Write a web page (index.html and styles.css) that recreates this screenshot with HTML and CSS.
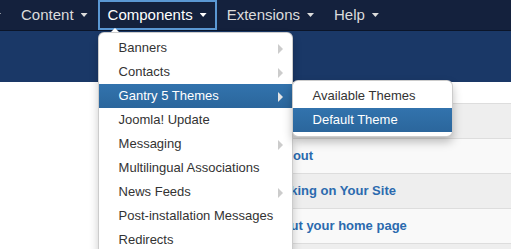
FILE: index.html
```html
<!DOCTYPE html>
<html>
<head>
<meta charset="utf-8">
<link rel="stylesheet" href="styles.css">
</head>
<body>
<header class="topbar">
  <ul class="nav">
    <li class="nav-item"><span class="nav-link">Menus<span class="caret"></span></span></li>
    <li class="nav-item"><span class="nav-link">Content<span class="caret"></span></span></li>
    <li class="nav-item is-open">
      <span class="nav-link">Components<span class="caret"></span></span>
      <ul class="dropdown">
        <li class="dd-item has-sub"><span class="dd-link">Banners</span></li>
        <li class="dd-item has-sub"><span class="dd-link">Contacts</span></li>
        <li class="dd-item has-sub is-active">
          <span class="dd-link">Gantry 5 Themes</span>
          <ul class="submenu">
            <li class="dd-item"><span class="dd-link">Available Themes</span></li>
            <li class="dd-item is-active"><span class="dd-link">Default Theme</span></li>
          </ul>
        </li>
        <li class="dd-item"><span class="dd-link">Joomla! Update</span></li>
        <li class="dd-item has-sub"><span class="dd-link">Messaging</span></li>
        <li class="dd-item"><span class="dd-link">Multilingual Associations</span></li>
        <li class="dd-item has-sub"><span class="dd-link">News Feeds</span></li>
        <li class="dd-item"><span class="dd-link">Post-installation Messages</span></li>
        <li class="dd-item"><span class="dd-link">Redirects</span></li>
        <li class="dd-item"><span class="dd-link">Search</span></li>
        <li class="dd-item"><span class="dd-link">Smart Search</span></li>
      </ul>
    </li>
    <li class="nav-item"><span class="nav-link">Extensions<span class="caret"></span></span></li>
    <li class="nav-item"><span class="nav-link">Help<span class="caret"></span></span></li>
  </ul>
</header>
<div class="band"></div>
<main class="main">
  <div class="side"></div>
  <div class="list">
    <div class="row odd"><span class="row-link">Getting Started</span></div>
    <div class="row"><span class="row-link">Forum About</span></div>
    <div class="row odd"><span class="row-link">Start Working on Your Site</span></div>
    <div class="row"><span class="row-link">Read about your home page</span></div>
    <div class="row odd"><span class="row-link">Extensions</span></div>
  </div>
</main>
</body>
</html>
```
FILE: styles.css
```css
html, body {
  margin: 0;
  padding: 0;
}
body {
  width: 511px;
  height: 249px;
  overflow: hidden;
  background: #fff;
  font-family: "Liberation Sans", Arial, sans-serif;
}
ul {
  list-style: none;
  margin: 0;
  padding: 0;
}

.topbar {
  height: 30px;
  background: #14213d;
  border-bottom: 1px solid #0b1529;
  position: relative;
  z-index: 5;
}
.nav {
  display: flex;
  height: 30px;
  margin-left: -68px;
}
.nav-item {
  position: relative;
  height: 30px;
}
.nav-link {
  display: block;
  padding: 0 10px;
  height: 30px;
  line-height: 30px;
  font-size: 15px;
  color: #dcdcdc;
  white-space: nowrap;
}
.caret {
  display: inline-block;
  width: 7px;
  height: 4px;
  margin-left: 7px;
  vertical-align: middle;
  position: relative;
  top: -1px;
  background: currentColor;
  clip-path: polygon(0 0, 100% 0, 50% 100%);
}
.is-open > .nav-link {
  color: #fff;
  box-shadow: inset 0 0 0 2px #5b98d4;
}

.dropdown {
  position: absolute;
  top: 32px;
  left: 0;
  width: 195px;
  box-sizing: border-box;
  background: #fff;
  border: 1px solid rgba(0, 0, 0, 0.2);
  border-radius: 6px;
  box-shadow: 0 5px 10px rgba(0, 0, 0, 0.2);
  padding: 3px 0 5px;
}
.dropdown::before {
  content: "";
  position: absolute;
  top: -5px;
  left: 12px;
  border-left: 4px solid transparent;
  border-right: 4px solid transparent;
  border-bottom: 4px solid #fff;
}
.dd-item {
  position: relative;
}
.dd-link {
  display: block;
  padding: 0 20px;
  height: 24px;
  line-height: 24px;
  font-size: 13px;
  color: #333;
  white-space: nowrap;
}
.has-sub > .dd-link::after {
  content: "";
  position: absolute;
  right: 9px;
  top: 8px;
  border-top: 5px solid transparent;
  border-bottom: 5px solid transparent;
  border-left: 5px solid #ccc;
}
.is-active > .dd-link {
  color: #fff;
  background: linear-gradient(to bottom, #3273ad, #2b669c);
}
.has-sub.is-active > .dd-link::after {
  border-left-color: #e4e4e4;
}
.submenu {
  position: absolute;
  top: -4px;
  left: 100%;
  width: 161px;
  box-sizing: border-box;
  background: #fff;
  border: 1px solid rgba(0, 0, 0, 0.2);
  border-radius: 6px;
  box-shadow: 0 5px 10px rgba(0, 0, 0, 0.25);
  padding: 3px 0 4px;
  z-index: 2;
}

.band {
  height: 51px;
  background: #1a3867;
}

.main {
  display: flex;
  padding-top: 21px;
}
.side {
  width: 221px;
  flex: none;
}
.list {
  flex: 1;
}
.row {
  height: 32px;
  padding-bottom: 2px;
  line-height: 32px;
  border-top: 1px solid #dddddd;
  background: #f9f9f9;
  padding-left: 11px;
  white-space: nowrap;
}
.row.odd {
  background: #eeeeee;
}
.row-link {
  font-size: 13px;
  font-weight: bold;
  color: #2b6aae;
}
```
